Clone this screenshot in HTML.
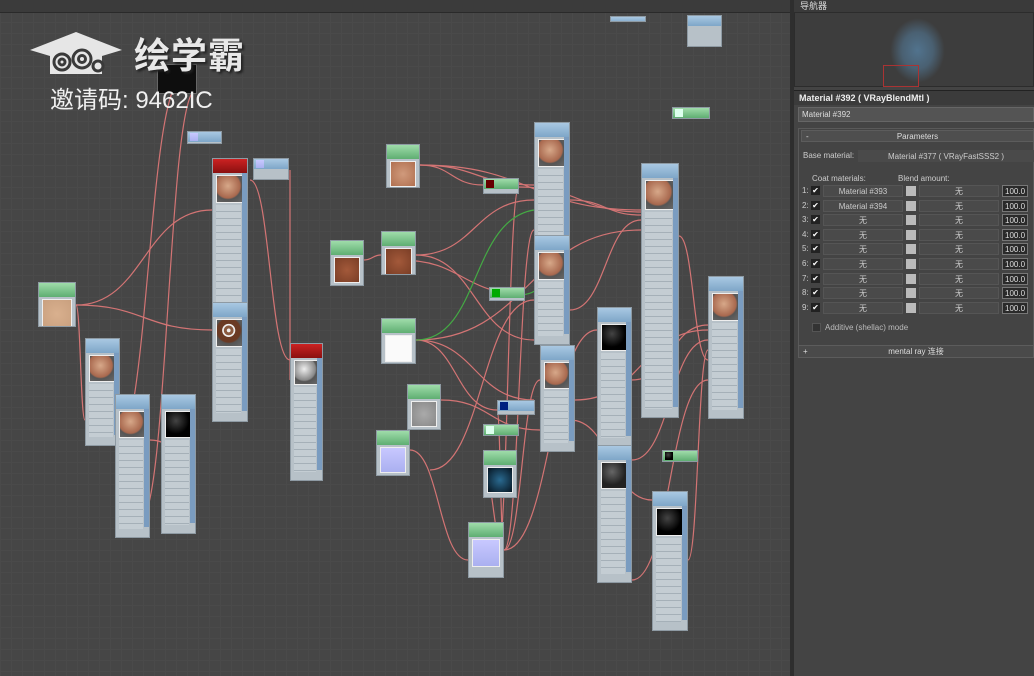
<!DOCTYPE html>
<html><head><meta charset="utf-8">
<style>
*{margin:0;padding:0;box-sizing:border-box}
body{width:1034px;height:676px;overflow:hidden;background:#464646;font-family:"Liberation Sans","Noto Sans CJK SC",sans-serif;position:relative}
#cv{position:absolute;left:0;top:0;width:790px;height:676px;background-color:#464646;
background-image:linear-gradient(#4a4a4a 1px,transparent 1px),linear-gradient(90deg,#4a4a4a 1px,transparent 1px);background-size:11px 11px;overflow:hidden}
#topbar{position:absolute;left:0;top:0;width:790px;height:13px;background:#3b3b3b;border-bottom:1px solid #2a2a2a}
.n{position:absolute;background:#b7c1c8;border:1px solid #8e9aa3;overflow:hidden}
.h{height:14px;background:linear-gradient(#a9c8e2,#7ea6c8);font-size:3px;color:#123}
.hg{background:linear-gradient(#9fdcaa,#5fae72)}
.hr{background:linear-gradient(#c22,#8a1010)}
.sw{margin:2px 3px;border:1px solid #eee;background:#777}
.rows{margin:0 6px 0 3px;background:repeating-linear-gradient(#c4cdd3 0 6px,#a5b0b8 6px 7px)}
.oc{position:absolute;right:0;top:14px;width:5px;bottom:10px;background:#7a9cc0}
#rp{position:absolute;left:790px;top:0;width:244px;height:676px;background:#444;border-left:4px solid #2e2e2e;color:#ddd;font-size:8px}
.bar{position:absolute;left:0;right:0}
.row{position:absolute;left:0;width:240px;height:13px;font-size:8px;color:#ccc}
.row span{position:absolute;top:1px}
.fld{position:absolute;top:0;height:12px;background:#3c3c3c;border:1px solid #555;text-align:center;line-height:11px}
.sq{position:absolute;top:1px;width:10px;height:10px;background:#bbb}
.num{position:absolute;top:0;height:12px;width:26px;background:#2a2a2a;border:1px solid #777;color:#ddd;line-height:11px;padding-left:2px}
.cb{position:absolute;left:17px;top:1px;width:9px;height:9px;background:#222;color:#fff;font-size:8px;line-height:9px;text-align:center}
</style></head><body>
<div id="cv">
<div id="topbar"></div>
<svg id="w" width="790" height="676" style="position:absolute;left:0;top:0;z-index:1" fill="none" stroke="#d37474" stroke-width="1.2"></svg>
<div id="nodes" style="position:absolute;left:0;top:0;z-index:2"></div>
<div style="position:absolute;left:157px;top:64px;width:40px;height:30px;background:#0e0e0e;border:1px solid #666;z-index:3"></div>
<svg style="position:absolute;left:28px;top:28px;z-index:4" width="96" height="48" viewBox="0 0 96 48">
<polygon points="2,22 48,4 94,22 74,28 74,46 22,46 22,28" fill="#e6e6e6"/>
<g fill="none" stroke="#3a3a3a" stroke-width="3"><circle cx="34" cy="34" r="8"/><circle cx="34" cy="34" r="3"/><circle cx="54" cy="31" r="9"/><circle cx="54" cy="31" r="3.5"/><circle cx="70" cy="38" r="5"/></g>
</svg>
<div style="position:absolute;left:134px;top:30px;font:bold 36px 'Noto Sans CJK SC',sans-serif;color:#e8e8e8;z-index:4;letter-spacing:1px;line-height:46px;text-shadow:2px 2px 2px #222">绘学霸</div>
<div style="position:absolute;left:50px;top:87px;font:24px 'Liberation Sans','Noto Sans CJK SC',sans-serif;color:#f0f0f0;z-index:4;line-height:28px">邀请码: 9462IC</div>
</div>
<div id="rp">
<div class="bar" style="top:0;height:12px;background:#3a3a3a;padding-left:6px;font-size:9px;line-height:12px">导航器</div>
<div class="bar" style="top:12px;height:75px;background:#3d3d3d;border:1px solid #2c2c2c">
<div style="position:absolute;left:95px;top:5px;width:55px;height:65px;background:radial-gradient(ellipse at 50% 50%,#5a8ab0 0,#4f6f88 40%,transparent 70%);opacity:.7"></div>
<div style="position:absolute;left:88px;top:52px;width:36px;height:22px;border:1px solid #a33"></div></div>
<div class="bar" style="top:90px;height:15px;background:#3b3b3b;border-top:1px solid #222;font-weight:bold;font-size:9px;line-height:15px;padding-left:5px;color:#eee">Material #392 ( VRayBlendMtl )</div>
<div class="bar" style="top:107px;left:4px;height:15px;background:#545454;border:1px solid #666;font-size:8px;line-height:13px;padding-left:3px">Material #392</div>
<div class="bar" style="top:128px;left:4px;height:222px;border:1px solid #5a5a5a"></div>
<div class="bar" style="top:130px;left:7px;height:12px;background:#4e4e4e;border:1px solid #5c5c5c;text-align:center;line-height:11px">Parameters<span style="position:absolute;left:4px">-</span></div>
<div class="row" style="top:150px"><span style="left:9px">Base material:</span><div class="fld" style="left:64px;width:176px;background:#4a4a4a;border-color:#4a4a4a">Material #377 ( VRayFastSSS2 )</div></div>
<div class="row" style="top:173px"><span style="left:18px">Coat materials:</span><span style="left:104px">Blend amount:</span></div>
<div id="coat"></div>
<div style="position:absolute;left:18px;top:323px;width:9px;height:9px;background:#333;border:1px solid #555"></div>
<div style="position:absolute;left:31px;top:323px;color:#bbb">Additive (shellac) mode</div>
<div class="bar" style="top:345px;left:4px;height:13px;background:#4a4a4a;border:1px solid #5c5c5c;text-align:center;line-height:12px">mental ray 连接<span style="position:absolute;left:4px">+</span></div>
</div>
<script>
var N=[
[38,282,38,45,'g','t'],[85,338,35,108,'b','s'],[115,394,35,144,'b','s'],[161,394,35,140,'b','k'],
[212,158,36,250,'r','s'],[212,302,36,120,'b','band'],[253,158,36,22,'b','lav',1],[187,131,35,13,'b','lav',1],
[290,343,33,138,'r','grey'],[386,144,34,44,'g','t2'],[330,240,34,46,'g','br'],[381,231,35,44,'g','br'],
[381,318,35,46,'g','w'],[407,384,34,46,'g','gt'],[376,430,34,46,'g','lav'],[483,178,36,16,'g','dr',1],
[489,287,36,14,'g','dg',1],[497,400,38,15,'b','db',1],[483,424,36,12,'g','lg',1],[483,450,34,48,'g','bt'],
[468,522,36,56,'g','lav'],[534,122,36,222,'b','s'],[534,235,36,110,'b','s'],[540,345,35,107,'b','s'],
[597,307,35,140,'b','k'],[597,445,35,138,'b','dk'],[641,163,38,255,'b','s'],[708,276,36,143,'b','s'],
[652,491,36,140,'b','k'],[662,450,36,12,'g','k',1],[672,107,38,12,'g','lg',1],[687,15,35,32,'b','',1],[610,16,36,6,'b','',1]];
var SW={t:'radial-gradient(circle,#d9b08e,#c9a07f)',t2:'radial-gradient(circle,#d09a7c,#b07050)',br:'radial-gradient(circle,#a3593a,#7a3e26)',
w:'#fafafa',gt:'radial-gradient(circle,#aaa,#888)',lav:'linear-gradient(#c8c8ff,#aab0f0)',dr:'#600',dg:'#0a0',db:'#002080',lg:'#dfe',
bt:'radial-gradient(circle,#2a6a90,#061420)',k:'radial-gradient(circle at 40% 35%,#444,#000 60%)',dk:'radial-gradient(circle at 40% 35%,#666,#222 60%)',
s:'radial-gradient(circle at 42% 38%,#d7a889,#a8684e 55%,#555 62%,#6a6a6a)',grey:'radial-gradient(circle at 40% 35%,#eee,#888 55%,#555 62%,#6a6a6a)',
band:'radial-gradient(circle at 45% 40%,#eee 0 8%,#8a5a40 10% 22%,#eee 24% 30%,#6a3a24 32% 55%,#555 62%,#6a6a6a)'};
var h='';
N.forEach(function(n){var x=n[0],y=n[1],w=n[2],H=n[3],hc=n[4]=='g'?' hg':n[4]=='r'?' hr':'';
if(n[6]){h+='<div class="n" style="left:'+x+'px;top:'+y+'px;width:'+w+'px;height:'+H+'px"><div class="h'+hc+'" style="height:'+Math.min(10,H)+'px;padding-left:'+(n[5]?12:0)+'px;position:relative">'+(n[5]?'<div style="position:absolute;left:2px;top:1px;width:8px;height:8px;background:'+SW[n[5]]+'"></div>':'')+'</div></div>';return;}
var sz=w-8;var rowsH=H-14-sz-6-8;
h+='<div class="n" style="left:'+x+'px;top:'+y+'px;width:'+w+'px;height:'+H+'px"><div class="h'+hc+'"></div><div class="sw" style="height:'+sz+'px;width:'+(sz)+'px;background:'+SW[n[5]]+'"></div>'+(rowsH>0?'<div class="rows" style="height:'+rowsH+'px"></div>':'')+(H>60?'<div class="oc"></div>':'')+'</div>';});
document.getElementById('nodes').innerHTML=h;
var P=[[76,305,212,210],[76,305,212,330],[76,305,85,420],[120,400,115,450],[196,460,150,440],[250,180,290,360],[290,380,290,170],
[420,165,534,185],[420,165,483,185],[420,165,641,210],[364,260,381,255],[416,255,534,200],[416,255,534,340],[416,340,534,400],[416,340,641,230],
[416,340,497,410],[441,400,540,430],[410,450,468,560],[519,187,641,212],[570,200,641,215],[570,310,641,220],[575,400,708,330],[632,380,708,325],
[679,236,708,360],[632,460,708,340],[688,560,708,350],[504,550,597,330],[504,550,540,380],[504,550,534,230],[504,550,497,410],[504,550,483,470],
[182,80,115,450],[196,90,140,520],[519,187,497,560],[534,300,430,470],[525,294,400,260],[570,420,652,500],[632,580,708,380]];
var s='';P.forEach(function(p){var mx=(p[0]+p[2])/2;s+='<path d="M'+p[0]+' '+p[1]+'C'+mx+' '+p[1]+' '+mx+' '+p[3]+' '+p[2]+' '+p[3]+'"/>';});
s+='<path stroke="#4a4" d="M519 295C560 295 560 230 534 210"/><path stroke="#4a4" d="M416 340C480 340 470 220 534 210"/>';
document.getElementById('w').innerHTML=s;
var c='';for(var i=0;i<9;i++){var t=185+i*14.6;var a=i==0?'Material #393':i==1?'Material #394':'无';
c+='<div class="row" style="top:'+t+'px"><span style="left:8px">'+(i+1)+':</span><div class="cb">✔</div><div class="fld" style="left:29px;width:80px;background:#4a4a4a">'+a+'</div><div class="sq" style="left:112px"></div><div class="fld" style="left:125px;width:80px;background:#4a4a4a">无</div><div class="num" style="left:208px">100.0</div></div>';}
document.getElementById('coat').innerHTML=c;
</script>
</body></html>
